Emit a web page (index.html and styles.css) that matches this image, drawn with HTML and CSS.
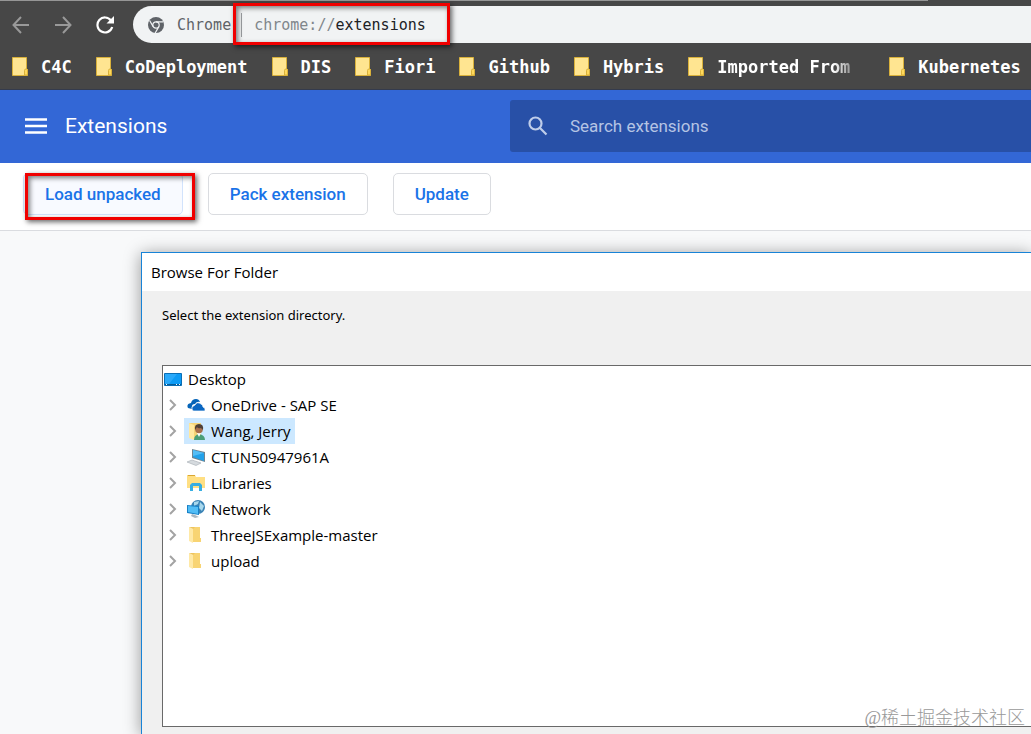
FILE: index.html
```
<!DOCTYPE html>
<html lang="en">

<head>
    <meta charset="UTF-8">
    <meta name="viewport" content="width=device-width, initial-scale=1.0">
    <title>Extensions</title>
    <link rel="stylesheet" href="styles.css">
</head>

<body>
    <svg class="sprite" aria-hidden="true">
        <symbol id="note" viewBox="0 0 16 19">
            <path d="M.5.5h14v12.500l1 1v4.500H.5z" fill="#ffe591" stroke="#d9b13b" />
            <path d="M12.500 18v-4.500q0-1.500 1.500-1.500h1.500V18z" fill="#ffd95c" stroke="#d9b13b" />
            <path d="M15 0h1v12h-1z" fill="#474747" />
        </symbol>
        <symbol id="chevron" viewBox="0 0 8 12">
            <path d="M1 1l5 5-5 5" fill="none" stroke="#a3a3a3" stroke-width="2" />
        </symbol>
        <symbol id="folder" viewBox="0 0 18 18">
            <path d="M6 1h7v11h1v4H6z" fill="#f8d473" />
            <path d="M2 1l4 2v14l-4-2z" fill="#ffe9a6" />
            <path d="M2 1h6l-2 2z" fill="#eec45c" />
        </symbol>
    </svg>

    <div class="browser">
        <div class="toolbar">
            <button class="nav" aria-label="Back">
                <svg width="18" height="18" viewBox="0 0 18 18" fill="none" stroke="#999" stroke-width="2"><path d="M17 9H2M9 1L1.500 9 9 17" /></svg>
            </button>
            <button class="nav" aria-label="Forward">
                <svg width="18" height="18" viewBox="0 0 18 18" fill="none" stroke="#999" stroke-width="2"><path d="M1 9h15M9 1l7.500 8L9 17" /></svg>
            </button>
            <button class="nav" aria-label="Reload">
                <svg width="18" height="18" viewBox="0 0 18 18"><path d="M15 4.500A7.500 7.500 0 1 0 16.200 11" fill="none" stroke="#fff" stroke-width="2.200" /><path d="M18 0v7.500h-7.500z" fill="#fff" /></svg>
            </button>
            <div class="omnibox">
                <svg width="16" height="16" viewBox="0 0 16 16">
                    <circle cx="8" cy="8" r="8" fill="#5f6368" />
                    <circle cx="8" cy="8" r="3.200" fill="none" stroke="#f1f3f4" stroke-width="1.200" />
                    <path d="M8 4.800h7.300M5.200 9.600L1.600 3.500M10.800 9.600L7.200 16" stroke="#f1f3f4" stroke-width="1.200" />
                </svg>
                <span class="chip">Chrome</span>
                <div class="address">
                    <label for="url">chrome://</label>
                    <input id="url" type="text" value="extensions">
                    <span class="mark"></span>
                </div>
            </div>
        </div>
        <nav class="bookmarks">
            <a href="#"><svg><use href="#note" /></svg><span>C4C</span></a>
            <a href="#"><svg><use href="#note" /></svg><span>CoDeployment</span></a>
            <a href="#"><svg><use href="#note" /></svg><span>DIS</span></a>
            <a href="#"><svg><use href="#note" /></svg><span>Fiori</span></a>
            <a href="#"><svg><use href="#note" /></svg><span>Github</span></a>
            <a href="#"><svg><use href="#note" /></svg><span>Hybris</span></a>
            <a href="#"><svg><use href="#note" /></svg><span class="fade">Imported From</span></a>
            <a href="#"><svg><use href="#note" /></svg><span>Kubernetes</span></a>
        </nav>
    </div>

    <header>
        <button class="menu" aria-label="Main menu">
            <svg width="22" height="16" viewBox="0 0 22 16"><path d="M0 1.500h22M0 8h22M0 14.500h22" stroke="#fff" stroke-width="2.500" /></svg>
        </button>
        <h1>Extensions</h1>
        <div class="search">
            <svg width="20" height="20" viewBox="0 0 20 20" fill="none" stroke="#bfcdea" stroke-width="2.200"><circle cx="7.500" cy="7.500" r="6" /><path d="M12 12l6.500 6.500" /></svg>
            <input type="search" placeholder="Search extensions" aria-label="Search extensions">
        </div>
    </header>

    <div class="actions">
        <div class="marked">
            <button class="active">Load unpacked</button>
            <span class="mark"></span>
        </div>
        <button>Pack extension</button>
        <button>Update</button>
    </div>

    <main>
        <section class="dialog">
            <h2>Browse For Folder</h2>
            <div class="content">
                <p>Select the extension directory.</p>
                <ul class="tree">
                    <li class="root">
                        <svg width="18" height="13" viewBox="0 0 18 13"><path d="M.5.5h17v12H.5z" fill="#0d9bf5" stroke="#096eb5" /><path d="M1 1h12L5 11H1z" fill="#29a9fa" /><path d="M1 11.500h16" stroke="#075c98" /><path d="M2 11.500h1M12 11.500h1M15 11.500h1" stroke="#fff" /></svg>
                        <span>Desktop</span>
                    </li>
                    <li>
                        <button aria-label="Expand"><svg><use href="#chevron" /></svg></button>
                        <span class="item">
                            <svg viewBox="0 0 18 18"><path d="M1 12q-2-4 3-5 1-4 5-4 3 0 4 3-3-1-5 2-4 0-3 5z" fill="#0564b8" /><path d="M6 15q-3-4 2-6 2-4 6-1 2 1 2 3 3 1 2 4z" fill="#0b67c2" stroke="#fff" stroke-width=".7" /></svg>
                            OneDrive - SAP SE
                        </span>
                    </li>
                    <li>
                        <button aria-label="Expand"><svg><use href="#chevron" /></svg></button>
                        <span class="item selected">
                            <svg viewBox="0 0 18 18"><path d="M2 1h12v15H2z" fill="#f5d477" /><path d="M2 1l5 2v15l-5-2z" fill="#ffe8a0" /><path d="M7 18q0-5 5-6 6 1 6 6z" fill="#4b9e78" /><path d="M10 11l2 4 2-4z" fill="#fff" /><circle cx="12" cy="7.500" r="3.800" fill="#a96f4c" /><path d="M8 8q-1-6 4-6t4 6l-2-2q-3 1-4-1z" fill="#4f4037" /></svg>
                            Wang, Jerry
                        </span>
                    </li>
                    <li>
                        <button aria-label="Expand"><svg><use href="#chevron" /></svg></button>
                        <span class="item">
                            <svg viewBox="0 0 18 18"><path d="M5 1l13 3v10L5 10z" fill="#6f8491" /><path d="M6 2l11 3v8L6 9z" fill="#22a1ea" /><path d="M6 2l11 3L6 8z" fill="#54bdf5" /><path d="M0 14l5-2 9 3-5 2.500z" fill="#d5dade" stroke="#a4abb1" stroke-width=".6" /></svg>
                            CTUN50947961A
                        </span>
                    </li>
                    <li>
                        <button aria-label="Expand"><svg><use href="#chevron" /></svg></button>
                        <span class="item">
                            <svg viewBox="0 0 18 18"><path d="M0 1h8l1 2h9v11H0z" fill="#ffdf83" /><path d="M1 1h7v1H1z" fill="#d9a734" /><path d="M3 17v-6l2-2h8l2 2v6h-3v-5H6v5z" fill="#37aee2" /></svg>
                            Libraries
                        </span>
                    </li>
                    <li>
                        <button aria-label="Expand"><svg><use href="#chevron" /></svg></button>
                        <span class="item">
                            <svg viewBox="0 0 18 18"><circle cx="11" cy="7" r="7" fill="#3a83b5" /><path d="M7 2l5-1-1 3-4 2zM13 2l4 4-2 5-3-3z" fill="#a8d8ed" /><path d="M0 5l12 1v9L0 13z" fill="#1781c6" /><path d="M1 6l10 1v7L1 12z" fill="#51bdf6" /><path d="M5 14l3 1 4 2-4 1-4-2z" fill="#aab7c1" /></svg>
                            Network
                        </span>
                    </li>
                    <li>
                        <button aria-label="Expand"><svg><use href="#chevron" /></svg></button>
                        <span class="item"><svg><use href="#folder" /></svg>ThreeJSExample-master</span>
                    </li>
                    <li>
                        <button aria-label="Expand"><svg><use href="#chevron" /></svg></button>
                        <span class="item"><svg><use href="#folder" /></svg>upload</span>
                    </li>
                </ul>
            </div>
        </section>
    </main>
    <div class="watermark">@稀土掘金技术社区</div>
</body>

</html>
```
FILE: styles.css
```
* {
    box-sizing: border-box;
}

body {
    display: flex;
    flex-direction: column;
    min-height: 100vh;
    margin: 0;
    position: relative;
    overflow: hidden;
    background-color: #f8f9fa;
    font-family: Roboto, sans-serif;
}

button {
    padding: 0;
    border: none;
    background: none;
    font-family: inherit;
    cursor: pointer;
}

svg {
    display: block;
    flex: none;
}

input {
    min-width: 0;
    padding: 0;
    border: none;
    outline: none;
    background: none;
    font: inherit;
}

.sprite {
    position: absolute;
    width: 0;
    height: 0;
}

/* red frame over a control */
.mark {
    position: absolute;
    border: 3px solid #f00000;
    box-shadow: 2px 2px 5px rgba(0, 0, 0, 0.6), inset 2px 2px 5px rgba(0, 0, 0, 0.5);
    pointer-events: none;
}

/* browser */
.browser {
    background-color: #474747;
    border-bottom: 1px solid #343b4d;
    font-family: "DejaVu Sans Mono", monospace;
}

.browser::before {
    content: "";
    display: block;
    width: 90%;
    height: 1px;
    background-color: #969696;
}

.toolbar {
    display: flex;
    align-items: center;
    gap: 24px;
    padding: 5px 0 0 12px;
}

.omnibox {
    flex: 1;
    display: flex;
    align-items: center;
    height: 37px;
    margin-left: -5px;
    padding-left: 15px;
    border-radius: 19px 0 0 19px;
    background-color: #f1f3f4;
    color: #5f6368;
    font-size: 15px;
}

.chip {
    margin-left: 13px;
    padding-right: 10px;
    line-height: 24px;
}

.address {
    flex: 1;
    display: flex;
    position: relative;
    padding-left: 12px;
    border-left: 1px solid #9a9da0;
    line-height: 24px;
}

.address label {
    color: #80868b;
}

.address input {
    flex: 1;
    color: #202124;
}

.address .mark {
    top: -10px;
    left: -9px;
    width: 217px;
    height: 42px;
}

.bookmarks {
    display: flex;
    gap: 24px;
    height: 46px;
    padding: 1px 0 0 12px;
    overflow: hidden;
}

.bookmarks a {
    flex: none;
    display: flex;
    align-items: center;
    gap: 13px;
    color: white;
    font-size: 17px;
    font-weight: bold;
    text-decoration: none;
}

.bookmarks svg {
    width: 16px;
    height: 19px;
}

.fade {
    width: 148px;
    -webkit-mask-image: linear-gradient(to right, #000 116px, transparent 147px);
    mask-image: linear-gradient(to right, #000 116px, transparent 147px);
}

/* page header */
header {
    display: flex;
    align-items: center;
    height: 73px;
    padding: 0 0 1px 25px;
    background-color: #3367d6;
    color: white;
}

h1 {
    flex: 1;
    margin: 0 0 0 18px;
    font-size: 21px;
    font-weight: normal;
}

.search {
    display: flex;
    align-items: center;
    gap: 22px;
    width: 521px;
    height: 52px;
    padding-left: 18px;
    border-radius: 3px 0 0 3px;
    background-color: #2850a7;
    font-size: 17px;
}

.search input {
    flex: 1;
    color: white;
}

.search input::placeholder {
    color: #b5c4e4;
    opacity: 1;
}

.actions {
    display: flex;
    gap: 25px;
    padding: 10px 23px 15px;
    border-bottom: 1px solid #dadce0;
    background-color: white;
}

.actions button {
    height: 42px;
    padding: 0 21px;
    border: 1px solid #dadce0;
    border-radius: 5px;
    color: #1a73e8;
    font-size: 17px;
    font-weight: 500;
}

.actions .active {
    border-color: #d2e3fc;
    background-color: #f8faff;
}

.marked {
    position: relative;
}

.marked .mark {
    top: 0;
    left: 2px;
    width: 170px;
    height: 47px;
}

/* folder window */
main {
    flex: 1;
    display: flex;
    padding: 21px 0 0 141px;
}

.dialog {
    flex: 1;
    display: flex;
    flex-direction: column;
    border: 1px solid #1883d7;
    border-width: 1px 0 0 1px;
    background-color: #f0f0f0;
    box-shadow: 0 2px 16px rgba(0, 0, 0, 0.4);
    color: black;
    font-family: "Open Sans", sans-serif;
    font-size: 15px;
}

h2 {
    margin: 0;
    padding-left: 9px;
    background-color: white;
    font-size: 15px;
    font-weight: normal;
    line-height: 38px;
}

.content {
    flex: 1;
    display: flex;
    flex-direction: column;
    padding: 12px 0 7px 20px;
}

p {
    margin: 0 0 38px;
    font-family: "Noto Sans", sans-serif;
    font-size: 13px;
    line-height: 24px;
}

.tree {
    flex: 1;
    margin: 0;
    padding: 0;
    border: 1px solid #696969;
    border-right: none;
    background-color: white;
    list-style: none;
}

.tree li {
    display: flex;
    align-items: center;
    height: 26px;
}

.tree .root {
    gap: 6px;
    padding-left: 1px;
}

.tree button {
    margin: 0 7px 0 6px;
}

.tree button svg {
    width: 8px;
    height: 12px;
}

.item {
    display: flex;
    align-items: center;
    gap: 6px;
    height: 26px;
    padding: 0 4px 0 3px;
}

.item svg {
    width: 18px;
    height: 18px;
}

.selected {
    background-color: #cce8ff;
}

.watermark {
    position: absolute;
    right: 6px;
    bottom: 3px;
    color: #999;
    font-family: "Liberation Serif", "Noto Sans CJK SC", serif;
    font-size: 18px;
    font-weight: 300;
    line-height: 26px;
}
```
